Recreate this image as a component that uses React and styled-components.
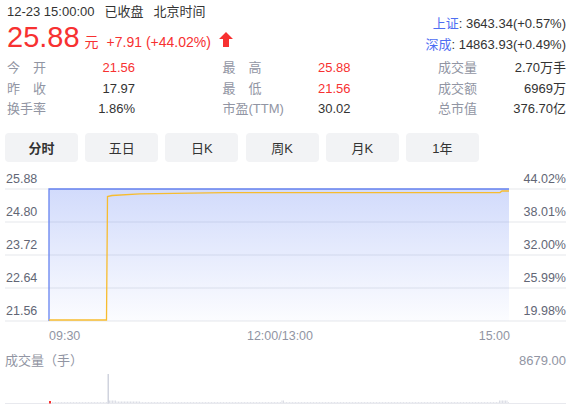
import React from "react";
import styled, { createGlobalStyle } from "styled-components";

const RED = "#f73131";
const GRAY = "#9195a3";
const DARK = "#333333";

const Global = createGlobalStyle`
  html, body { margin: 0; padding: 0; background: #fff; }
  body {
    font-family: "Liberation Sans", "Noto Sans CJK SC", sans-serif;
    color: ${DARK};
    overflow: hidden;
  }
`;

const Page = styled.div`
  width: 573px;
  height: 417px;
  overflow: hidden;
`;

const Header = styled.div`
  display: flex;
  justify-content: space-between;
  padding: 3px 7px 0 7px;
`;

const LeftHead = styled.div`
  display: flex;
  flex-direction: column;
`;

const TimeRow = styled.div`
  display: flex;
  gap: 10px;
  font-size: 13px;
  line-height: 18px;
  color: ${DARK};
`;

const PriceRow = styled.div`
  display: flex;
  align-items: baseline;
  height: 30px;
  margin-top: 1px;
  color: ${RED};
`;

const Price = styled.span`
  font-size: 29px;
  line-height: 30px;
`;

const Unit = styled.span`
  font-size: 14px;
  margin-left: 5px;
`;

const Change = styled.span`
  font-size: 14px;
  margin-left: 8px;
`;

const Arrow = styled.svg`
  width: 14px;
  height: 15px;
  margin-left: 8px;
  align-self: center;
  margin-top: 4px;
`;

const RightHead = styled.div`
  padding-top: 10px;
  display: flex;
  flex-direction: column;
  align-items: flex-end;
  font-size: 13px;
  line-height: 21px;
  color: ${DARK};
`;

const IndexName = styled.span`
  color: #4e6ef2;
`;

const Stats = styled.div`
  display: grid;
  grid-template-columns: 128px 128px 128px;
  justify-content: space-between;
  padding: 0 7px;
  margin-top: 3px;
`;

const StatCell = styled.div`
  display: flex;
  justify-content: space-between;
  font-size: 13px;
  line-height: 20.5px;
`;

const Label = styled.span`
  color: ${GRAY};
  white-space: pre;
`;

const Value = styled.span`
  color: ${(p) => (p.$red ? RED : DARK)};
`;

const Tabs = styled.div`
  display: flex;
  gap: 7.2px;
  padding: 0 5px;
  margin-top: 13.5px;
`;

const Tab = styled.div`
  width: 73px;
  height: 29px;
  border-radius: 4px;
  background: #f2f3f5;
  display: flex;
  align-items: center;
  justify-content: center;
  font-size: 13px;
  color: ${DARK};
  font-weight: ${(p) => (p.$active ? 700 : 400)};
`;

const ChartSvg = styled.svg`
  display: block;
  margin-top: 2px;
  font-family: "Liberation Sans", sans-serif;
`;

const VolHead = styled.div`
  display: flex;
  justify-content: space-between;
  padding: 0 7px 0 5px;
  font-size: 13px;
  line-height: 20px;
  color: ${GRAY};
  margin-top: 5px;
`;

const VolSvg = styled.svg`
  display: block;
`;

const Footer = styled.div`
  padding-left: 143px;
  margin-top: 10px;
  font-size: 13px;
  line-height: 18px;
  color: ${GRAY};
`;

const stats = [
  [["今　开", "21.56", true], ["最　高", "25.88", true], ["成交量", "2.70万手", false]],
  [["昨　收", "17.97", false], ["最　低", "21.56", true], ["成交额", "6969万", false]],
  [["换手率", "1.86%", false], ["市盈(TTM)", "30.02", false], ["总市值", "376.70亿", false]],
];

const tabs = ["分时", "五日", "日K", "周K", "月K", "1年"];

const gridYs = [25, 58, 91, 124, 157];
const leftLabels = ["25.88", "24.80", "23.72", "22.64", "21.56"];
const rightLabels = ["44.02%", "38.01%", "32.00%", "25.99%", "19.98%"];

function volBars() {
  const bars = [];
  for (let x = 52; x < 509; x += 1.5) {
    let h = 0.8;
    if (x > 108 && x < 116) h = 2.5;
    else if (x > 116 && x < 140) h = 1.5;
    else if (Math.abs(x - 282) < 1.5) h = 2.5;
    else if (x > 498 && x < 508) h = 2.5;
    bars.push(<rect key={x} x={x} y={32 - h} width="1" height={h} fill="#dcdee6" />);
  }
  return bars;
}

export default function App() {
  return (
    <Page>
      <Global />
      <Header>
        <LeftHead>
          <TimeRow>
            <span>12-23 15:00:00</span>
            <span>已收盘</span>
            <span>北京时间</span>
          </TimeRow>
          <PriceRow>
            <Price>25.88</Price>
            <Unit>元</Unit>
            <Change>+7.91 (+44.02%)</Change>
            <Arrow viewBox="0 0 14 15">
              <path d="M7 0 L14 7 L10 7 L10 15 L4 15 L4 7 L0 7 Z" fill={RED} />
            </Arrow>
          </PriceRow>
        </LeftHead>
        <RightHead>
          <div>
            <IndexName>上证</IndexName>: 3643.34(+0.57%)
          </div>
          <div>
            <IndexName>深成</IndexName>: 14863.93(+0.49%)
          </div>
        </RightHead>
      </Header>

      <Stats>
        {stats.flat().map(([l, v, red]) => (
          <StatCell key={l}>
            <Label>{l}</Label>
            <Value $red={red}>{v}</Value>
          </StatCell>
        ))}
      </Stats>

      <Tabs>
        {tabs.map((t, i) => (
          <Tab key={t} $active={i === 0}>
            {t}
          </Tab>
        ))}
      </Tabs>

      <ChartSvg width="573" height="182" viewBox="0 0 573 182">
        <defs>
          <linearGradient id="area" x1="0" y1="0" x2="0" y2="1">
            <stop offset="0" stopColor="#5d7ef2" stopOpacity="0.28" />
            <stop offset="1" stopColor="#5d7ef2" stopOpacity="0.02" />
          </linearGradient>
        </defs>
        {gridYs.map((y) => (
          <line key={y} x1="5" x2="566" y1={y} y2={y} stroke="#eeeff2" strokeWidth="1.5" />
        ))}
        <rect x="49" y="25" width="460" height="132" fill="url(#area)" />
        <path d="M49 157 L49 25 L509 25" fill="none" stroke="#6683f0" strokeWidth="1.3" />
        <path
          d="M49 156 L106.5 156 L107.5 32.5 L112 31.5 L140 29.8 L225 28.6 L500 28.6 L502 27 L509 27"
          fill="none"
          stroke="#f7bc2f"
          strokeWidth="1.3"
        />
        {leftLabels.map((t, i) => (
          <text key={t} x="6" y={gridYs[i] - 6} fontSize="12.5" fill="#626675">
            {t}
          </text>
        ))}
        {rightLabels.map((t, i) => (
          <text key={t} x="566" y={gridYs[i] - 6} fontSize="12.5" fill="#626675" textAnchor="end">
            {t}
          </text>
        ))}
        <text x="49" y="176" fontSize="12.5" fill={GRAY}>09:30</text>
        <text x="280" y="176" fontSize="12.5" fill={GRAY} textAnchor="middle">12:00/13:00</text>
        <text x="510" y="176" fontSize="12.5" fill={GRAY} textAnchor="end">15:00</text>
      </ChartSvg>

      <VolHead>
        <span>成交量（手）</span>
        <span>8679.00</span>
      </VolHead>

      <VolSvg width="573" height="34" viewBox="0 0 573 34">
        <line x1="5" x2="566" y1="32.5" y2="32.5" stroke="#e8e9ee" strokeWidth="1" />
        <rect x="49" y="30" width="2" height="2.5" fill={RED} />
        <rect x="107.5" y="3" width="1.5" height="29.5" fill="#d0d3de" />
        {volBars()}
      </VolSvg>

      <Footer>分时成交明细</Footer>
    </Page>
  );
}
